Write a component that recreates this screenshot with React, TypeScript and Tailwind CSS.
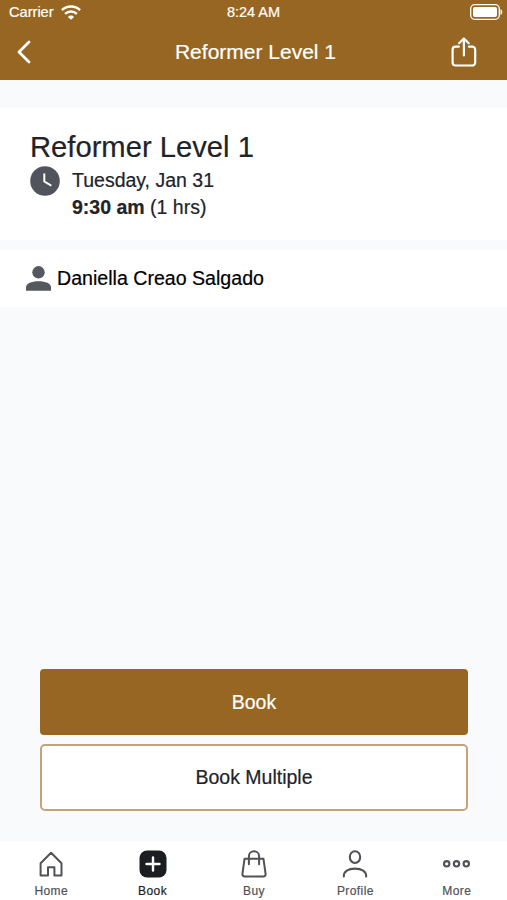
import React, { useState } from "react";

const stroke = {
  fill: "none",
  stroke: "currentColor",
  strokeWidth: 2,
  strokeLinecap: "round" as const,
  strokeLinejoin: "round" as const,
};

function WifiIcon() {
  return (
    <svg width="20" height="15" viewBox="0 0 20 15" fill="none" stroke="currentColor" strokeWidth="2.4">
      <path d="M.9 5.2a13.2 13.2 0 0 1 18.2 0" />
      <path d="M4.1 8.9a8.4 8.4 0 0 1 11.8 0" />
      <path d="M10 14.8 6.9 11.9a4.4 4.4 0 0 1 6.2 0Z" fill="currentColor" stroke="none" />
    </svg>
  );
}

function BatteryIcon() {
  return (
    <svg width="33" height="16" viewBox="0 0 33 16" fill="none">
      <rect x=".7" y=".7" width="28.6" height="14.6" rx="4" stroke="currentColor" strokeWidth="1.3" />
      <rect x="3" y="3" width="24" height="10" rx="2" fill="currentColor" />
      <path d="M30.5 5.2c2.4.8 2.4 4.8 0 5.6Z" fill="currentColor" />
    </svg>
  );
}

function ShareIcon() {
  return (
    <svg width="26" height="30" viewBox="0 0 26 30" {...stroke} strokeWidth={2.2}>
      <path d="M7.8 9.7H4.6a3 3 0 0 0-3 3v12.8a3 3 0 0 0 3 3h16.6a3 3 0 0 0 3-3V12.7a3 3 0 0 0-3-3H18" />
      <path d="M12.9 18.5V1.6M8.1 6.2l4.8-4.7 4.8 4.7" />
    </svg>
  );
}

function HomeIcon() {
  return (
    <svg width="28" height="28" viewBox="0 0 28 28" {...stroke} strokeWidth={2}>
      <path d="M3.6 13.2 14.1 2.7l10.4 10.5v12.2h-7.1v-8.1h-6.4v8.1H3.6Z" />
    </svg>
  );
}

function BookIcon() {
  return (
    <svg width="28" height="28" viewBox="0 0 28 28">
      <rect x=".5" y=".5" width="27" height="27" rx="7.5" fill="#1b1d20" />
      <path d="M14 7.5v13M7.5 14h13" stroke="#fff" strokeWidth="2.4" strokeLinecap="round" />
    </svg>
  );
}

function BuyIcon() {
  return (
    <svg width="28" height="28" viewBox="0 0 28 28" {...stroke} strokeWidth={2}>
      <path d="M4.5 8.8h19l2.1 15.3a2.2 2.2 0 0 1-2.2 2.4H4.6a2.2 2.2 0 0 1-2.2-2.4Z" />
      <path d="M8.9 14.2V6.4a5.1 5.1 0 0 1 10.2 0v7.8" />
    </svg>
  );
}

function ProfileIcon() {
  return (
    <svg width="28" height="28" viewBox="0 0 28 28" {...stroke} strokeWidth={2.1}>
      <ellipse cx="14" cy="7.1" rx="5.2" ry="5.9" />
      <path d="M2.8 26.4C2.8 21.6 7.2 18.6 14 18.6s11.2 3 11.2 7.8" />
    </svg>
  );
}

function MoreIcon() {
  return (
    <svg width="28" height="28" viewBox="0 0 28 28" fill="none" stroke="currentColor" strokeWidth="2.1">
      <circle cx="3.7" cy="13.8" r="2.7" />
      <circle cx="13.5" cy="13.8" r="2.7" />
      <circle cx="23.3" cy="13.8" r="2.7" />
    </svg>
  );
}

const navItems = [
  { icon: <HomeIcon />, label: "Home" },
  { icon: <BookIcon />, label: "Book" },
  { icon: <BuyIcon />, label: "Buy" },
  { icon: <ProfileIcon />, label: "Profile" },
  { icon: <MoreIcon />, label: "More" },
];

function Header() {
  return (
    <header className="h-20 bg-[#986623] text-white">
      {/* status bar */}
      <div className="grid h-6 grid-cols-3 items-center pl-[9px] pr-1 text-[14.6px]">
        <div className="flex items-center gap-[7px] pt-0.5">
          <span>Carrier</span>
          <WifiIcon />
        </div>
        <span className="pr-[5px] pt-px text-center text-[14.5px]">8:24 AM</span>
        <div className="flex justify-end">
          <BatteryIcon />
        </div>
      </div>
      <div className="grid h-14 grid-cols-[57px_1fr_57px] items-center">
        <button className="pl-[17px]" aria-label="Back">
          <svg width="14" height="24" viewBox="0 0 14 24" {...stroke} strokeWidth={2.8}>
            <path d="M12 2 2 12l10 10" />
          </svg>
        </button>
        <h1 className="pl-1 text-center text-[21px]">Reformer Level 1</h1>
        <button className="pl-px" aria-label="Share">
          <ShareIcon />
        </button>
      </div>
    </header>
  );
}

export default function App() {
  const [active, setActive] = useState("Book");

  return (
    <div className="flex h-[900px] w-full flex-col overflow-hidden bg-[#f8fafc] font-['Liberation_Sans',Arial,sans-serif] text-[#212329] [-webkit-text-stroke:0.2px_currentColor]">
      <Header />

      <main className="flex flex-1 flex-col pt-7">
        <section className="h-[132px] bg-white px-[30px] pt-[21px]">
          <h2 className="text-[29.2px] leading-9">Reformer Level 1</h2>
          <div className="flex gap-3">
            <svg className="mt-px" width="30" height="30" viewBox="0 0 30 30">
              <circle cx="15" cy="15" r="14.8" fill="#51545c" />
              <path d="M14.3 7.5v8l7 4.2" fill="none" stroke="#fff" strokeWidth="2" />
            </svg>
            <div className="pt-0.5 text-[19.5px] leading-[27px]">
              <p>Tuesday, Jan 31</p>
              <p>
                <b>9:30 am</b> (1 hrs)
              </p>
            </div>
          </div>
        </section>

        <section className="mt-2.5 flex h-[57px] items-center gap-1.5 bg-white pl-[26px] text-[19.6px] text-black">
          <svg width="25" height="25" viewBox="0 0 25 25" fill="#55585c">
            <circle cx="12.5" cy="6.3" r="6.2" />
            <path d="M0 24.8v-3.3C0 17.3 5.3 15.2 12.5 15.2S25 17.3 25 21.5v3.3Z" />
          </svg>
          <span>Daniella Creao Salgado</span>
        </section>

        <div className="mt-auto flex flex-col gap-[9px] px-10 pb-[30px] pr-[39px] text-[19.5px]">
          <button className="h-[66px] rounded bg-[#986623] pt-px text-white">Book</button>
          <button className="h-[67px] rounded-[5px] border-2 border-[#c2a37a] bg-white pt-px">Book Multiple</button>
        </div>
      </main>

      <nav className="grid h-[59px] grid-cols-5 bg-white">
        {navItems.map((item) => (
          <button
            key={item.label}
            onClick={() => setActive(item.label)}
            className={`flex flex-col items-center pl-px pt-[9px] text-[12px] leading-[14px] tracking-[0.4px] ${
              item.label === active ? "text-[#1b1d20]" : "text-[#505257]"
            }`}
          >
            {item.icon}
            <span className="mt-[6px]">{item.label}</span>
          </button>
        ))}
      </nav>
    </div>
  );
}
